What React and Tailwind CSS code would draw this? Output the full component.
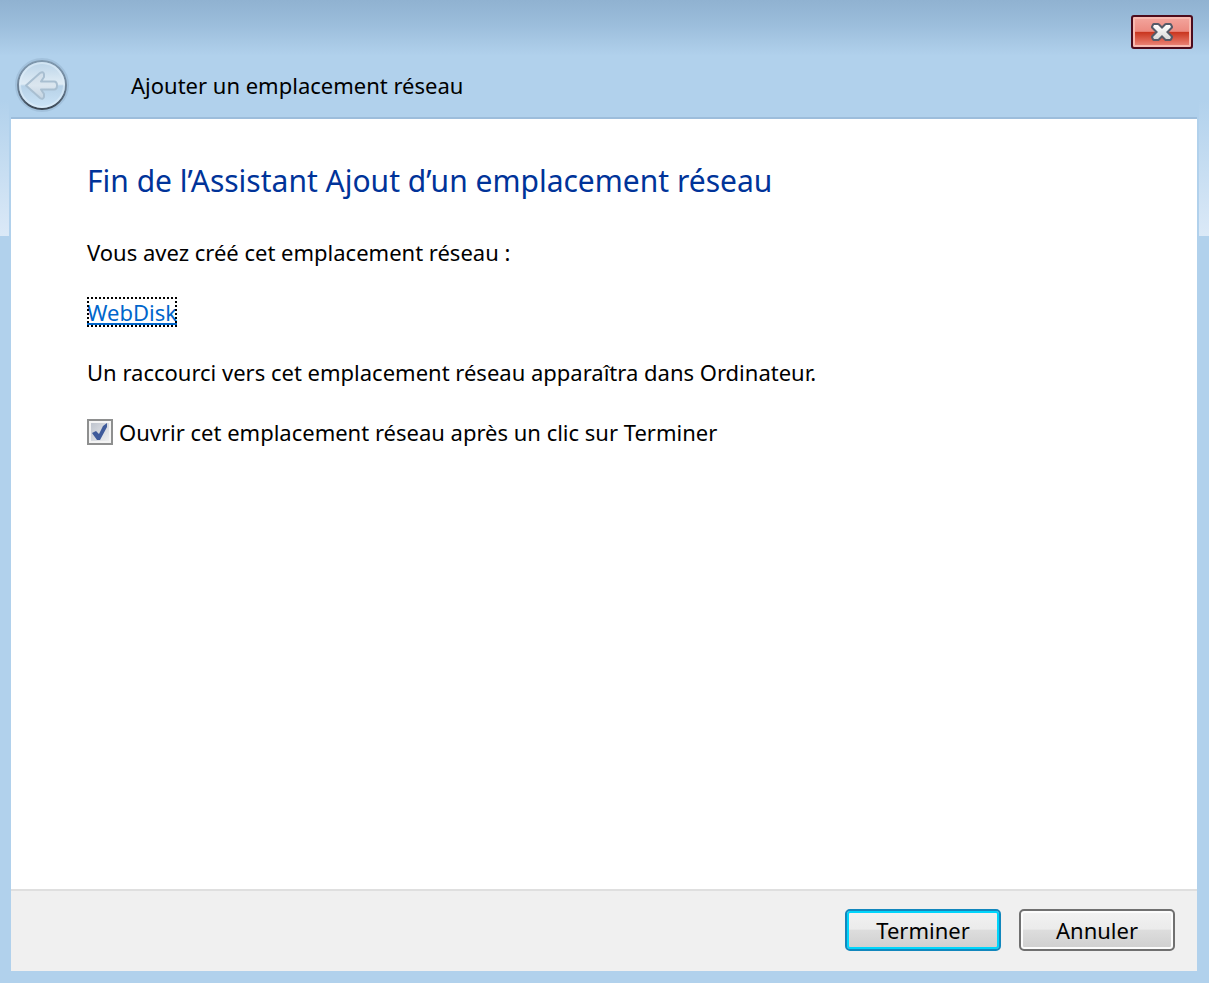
import React, { useState } from 'react';

const BackIcon = () => (
  <svg viewBox="0 0 54 54" className="w-full h-full" aria-hidden="true">
    <defs>
      <linearGradient id="disc" x1="0" y1="0" x2="0" y2="1">
        <stop offset="0" stopColor="#b9d3e8" />
        <stop offset="0.48" stopColor="#e0ecf5" />
        <stop offset="0.52" stopColor="#b6d1e7" />
        <stop offset="1" stopColor="#cde5f8" />
      </linearGradient>
      <linearGradient id="ring" x1="0" y1="0" x2="0" y2="1">
        <stop offset="0" stopColor="#7f98ae" />
        <stop offset="0.5" stopColor="#6f8499" />
        <stop offset="1" stopColor="#3b4754" />
      </linearGradient>
      <linearGradient id="arrow" x1="0" y1="0" x2="0" y2="1">
        <stop offset="0" stopColor="#cfdde9" />
        <stop offset="0.5" stopColor="#dbe6ef" />
        <stop offset="1" stopColor="#c3d3e1" />
      </linearGradient>
    </defs>
    <circle cx="27" cy="27" r="26" fill="none" stroke="#a2c1dc" strokeWidth="2" />
    <circle cx="27" cy="27" r="24" fill="url(#disc)" stroke="url(#ring)" strokeWidth="2" />
    <circle cx="27" cy="27" r="22" fill="none" stroke="#e0eefa" strokeWidth="2" opacity="0.6" />
    <path
      d="M11 27.5 L25 15 Q28 13 29 16 L29 19 L26 23.5 L39 23.5 Q42 23.5 42 27.5 Q42 31.5 39 31.5 L26 31.5 L29 36 L29 39 Q28 42 25 40 Z"
      fill="url(#arrow)"
      stroke="#a9bfd1"
      strokeWidth="2"
      strokeLinejoin="round"
    />
  </svg>
);

const CloseIcon = () => (
  <svg viewBox="0 0 22 18" className="w-[22px] h-[18px]" aria-hidden="true">
    <defs>
      <linearGradient id="cross" x1="0" y1="0" x2="0" y2="1">
        <stop offset="0" stopColor="#ffffff" />
        <stop offset="1" stopColor="#d9d9d9" />
      </linearGradient>
    </defs>
    <path
      d="M3 2 H7 L11 6 L15 2 H19 L20 4 L15 9 L20 14 L19 16 H15 L11 12 L7 16 H3 L2 14 L7 9 L2 4 Z"
      fill="url(#cross)"
      stroke="#555a68"
      strokeWidth="4"
      strokeLinejoin="round"
      paintOrder="stroke"
    />
  </svg>
);

const CheckIcon = () => (
  <svg viewBox="0 0 26 26" className="absolute inset-0 pointer-events-none" aria-hidden="true">
    <path d="M5 14 L9 12 L12 15 L16 7 L20 4 L20 8 L13 21 L10 21 Z" fill="#3f5b9b" />
  </svg>
);

const DialogButton = ({ primary, children }) => (
  <button
    type="button"
    className={
      primary
        ? 'w-39 h-[42px] rounded-[5px] border-2 border-[#1287bd] bg-[linear-gradient(#f2f2f2,#ebebeb_48%,#dddddd_50%,#cfcfcf)] shadow-[inset_0_0_0_2px_#00d5fb]'
        : 'w-39 h-[42px] rounded-[5px] border-2 border-[#707070] bg-[linear-gradient(#f2f2f2,#ebebeb_48%,#dddddd_50%,#cfcfcf)] shadow-[inset_0_0_0_2px_#fcfcfc]'
    }
  >
    {children}
  </button>
);

const App = () => {
  const [openAfter, setOpenAfter] = useState(true);

  return (
    <div className="min-h-screen flex flex-col pl-[11px] pr-3 pb-3 font-['Noto_Sans','Open_Sans',sans-serif] text-[22px] leading-[30px] text-black bg-[#b1d1ec] bg-[linear-gradient(#b1d1ec,#dbe9f7),linear-gradient(#b1d1ec,#dbe9f7),linear-gradient(#90b2d1,#9bbddb_24px,#b1d1ec_56px)] bg-[position:0_100px,100%_100px,0_0] bg-[size:9px_136px,10px_136px,100%_56px] bg-no-repeat">
      <header className="pt-[15px] pb-[5px]">
        <div className="flex justify-end pr-1">
          <button
            type="button"
            aria-label="Fermer"
            className="w-[62px] h-[34px] flex items-center justify-center rounded-[3px] border-2 border-[#4c0b1c] bg-[linear-gradient(#f3a69e,#ec8a80_48%,#c8341d_50%,#dc5f4d_75%,#ee8c80)] shadow-[inset_0_0_0_2px_#f7b9b0]"
          >
            <CloseIcon />
          </button>
        </div>
        <div className="flex items-center mt-[9px]">
          <button type="button" aria-label="Précédent" className="w-[54px] h-[54px] ml-1">
            <BackIcon />
          </button>
          <h1 className="ml-[62px]">Ajouter un emplacement réseau</h1>
        </div>
      </header>

      <main className="flex-1 border-t-2 border-[#9dbddb] bg-white px-19 pt-[42px]">
        <h2 className="text-[30px] leading-10 text-[#003399]">
          Fin de l’Assistant Ajout d’un emplacement réseau
        </h2>
        <div className="mt-9 flex flex-col items-start gap-[30px]">
          <p>Vous avez créé cet emplacement réseau :</p>
          <a
            href="#webdisk"
            className="text-[#0066cc] underline decoration-2 underline-offset-2 outline-2 outline-dotted outline-black -outline-offset-2"
          >
            WebDisk
          </a>
          <p>Un raccourci vers cet emplacement réseau apparaîtra dans Ordinateur.</p>
          <label className="flex items-center gap-[6px]">
            <span className="relative w-[26px] h-[26px]">
              <input
                type="checkbox"
                checked={openAfter}
                onChange={(e) => setOpenAfter(e.target.checked)}
                className="block appearance-none w-[26px] h-[26px] border-2 border-[#8e8f8f] bg-linear-to-br from-[#b9bfca] to-[#f4f4f4] shadow-[inset_0_0_0_2px_#f4f4f4]"
              />
              {openAfter && <CheckIcon />}
            </span>
            Ouvrir cet emplacement réseau après un clic sur Terminer
          </label>
        </div>
      </main>

      <footer className="flex justify-end gap-[18px] border-t-2 border-[#dfdfdf] bg-[#f0f0f0] pt-[18px] pb-5 pr-[22px]">
        <DialogButton primary>Terminer</DialogButton>
        <DialogButton>Annuler</DialogButton>
      </footer>
    </div>
  );
};

export default App;
